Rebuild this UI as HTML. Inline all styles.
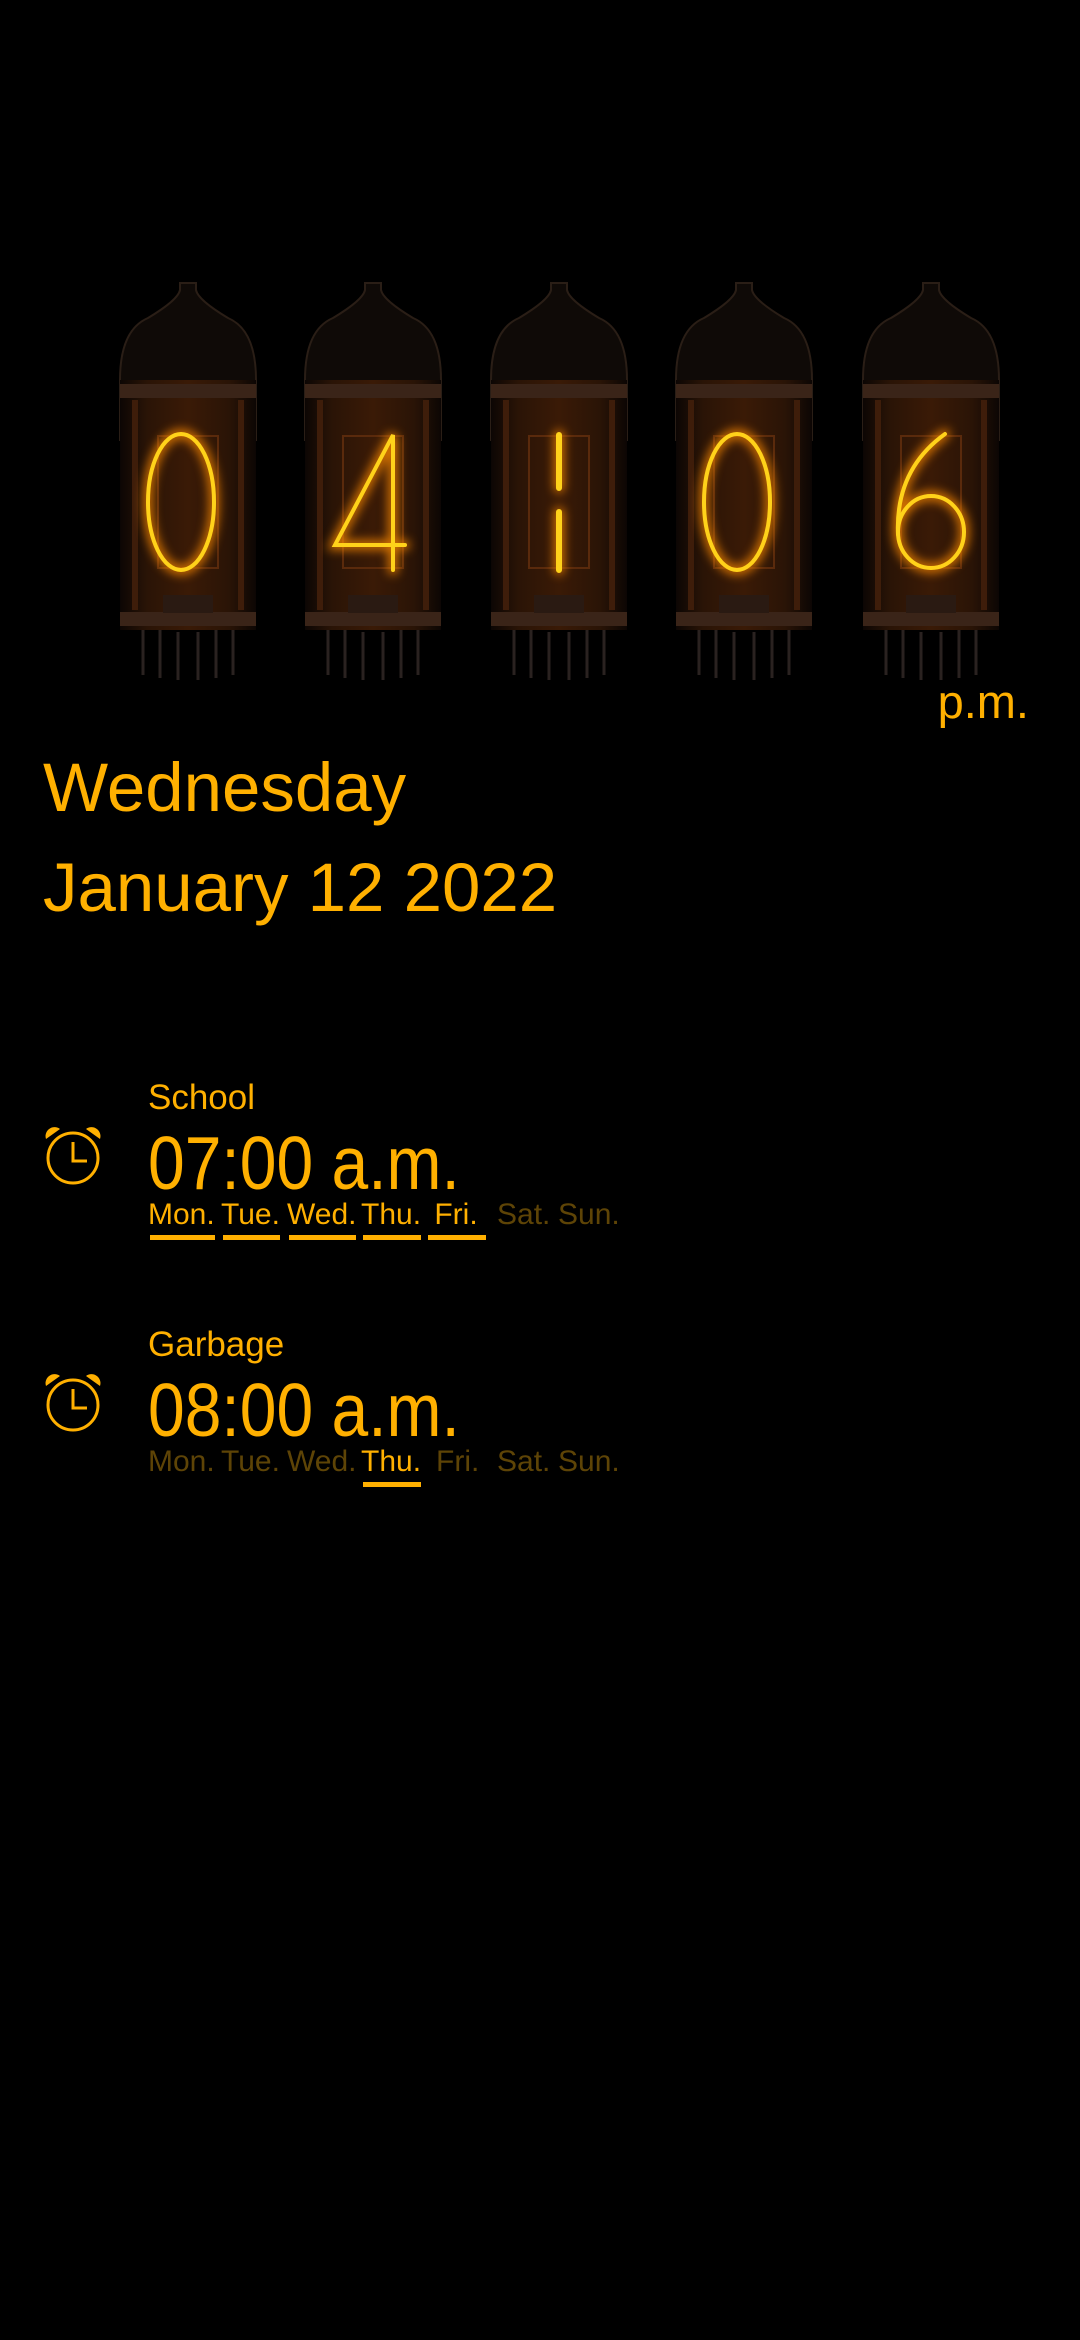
<!DOCTYPE html>
<html><head><meta charset="utf-8"><style>
html,body{margin:0;padding:0;background:#000;width:1080px;height:2340px;overflow:hidden}
body{position:relative;font-family:"Liberation Sans",sans-serif;color:#FFB000}
.t{position:absolute;white-space:nowrap;line-height:1}
.tm{transform:scaleX(0.88);transform-origin:0 0}
.d{position:absolute;font-size:30px;white-space:nowrap;line-height:1}
.on{color:#FFB000}
.on:after{content:"";position:absolute;left:2px;right:0;bottom:-10px;height:5px;background:#FFB000}
.off{color:#5e4406}
</style></head><body>
<svg width="1080" height="700" style="position:absolute;left:0;top:0">
<defs>
<linearGradient id="g" x1="0" x2="1">
<stop offset="0" stop-color="#0c0604"/><stop offset=".2" stop-color="#2a1406"/><stop offset=".5" stop-color="#3a1a06"/><stop offset=".8" stop-color="#2a1406"/><stop offset="1" stop-color="#0c0604"/></linearGradient>
<filter id="gl" x="-50%" y="-50%" width="200%" height="200%"><feGaussianBlur stdDeviation="5"/></filter>
<g id="tube">
<path d="M-68,440 V380 Q-68,330 -40,318 Q-10,300 -8,290 V283 H8 V290 Q10,300 40,318 Q68,330 68,380 V440 Z" fill="#0f0a07" stroke="#2a1e16" stroke-width="2"/>
<rect x="-68" y="380" width="136" height="250" fill="url(#g)"/>
<rect x="-68" y="384" width="136" height="14" fill="#3a2418"/>
<rect x="-68" y="612" width="136" height="14" fill="#3a2418"/>
<rect x="-56" y="400" width="6" height="210" fill="#3e1d0a"/>
<rect x="50" y="400" width="6" height="210" fill="#3e1d0a"/>
<rect x="-30" y="436" width="60" height="132" fill="none" stroke="#5a2a0c" stroke-width="2"/>
<rect x="-25" y="595" width="50" height="18" fill="#2a1a12"/>
<g stroke="#2a2220" stroke-width="3" fill="none">
<path d="M-45,630 V675 M-28,630 V678 M-10,632 V680 M10,632 V680 M28,630 V678 M45,630 V675"/>
</g>
</g>
</defs>
<g transform="translate(188,0)"><use href="#tube"/></g>
<g transform="translate(373,0)"><use href="#tube"/></g>
<g transform="translate(559,0)"><use href="#tube"/></g>
<g transform="translate(744,0)"><use href="#tube"/></g>
<g transform="translate(931,0)"><use href="#tube"/></g>
<g fill="none" stroke-linecap="round">
<g stroke="#ff8a00" stroke-width="10" filter="url(#gl)" opacity=".8">
<ellipse cx="181" cy="502" rx="33" ry="68"/>
<path d="M393,570 V435 L335,545 H405"/>
<path d="M559,435 V488 M559,512 V570"/>
<ellipse cx="737" cy="502" rx="33" ry="68"/>
<path d="M945,434 Q895,470 898,535 M931,496 m-33,36 a33,36 0 1,0 66,0 a33,36 0 1,0 -66,0"/>
</g>
<g stroke="#ffd21a" stroke-width="4">
<ellipse cx="181" cy="502" rx="33" ry="68"/>
<path d="M393,570 V435 L335,545 H405"/>
<path d="M559,435 V488 M559,512 V570" stroke-width="6"/>
<ellipse cx="737" cy="502" rx="33" ry="68"/>
<path d="M945,434 Q895,470 898,535 M931,496 m-33,36 a33,36 0 1,0 66,0 a33,36 0 1,0 -66,0"/>
</g>
</g>
</svg>
<div class="t" style="right:51px;top:678px;font-size:47px">p.m.</div>
<div class="t" style="left:43px;top:753px;font-size:69px">Wednesday</div>
<div class="t" style="left:43px;top:853px;font-size:69px">January 12 2022</div>

<svg width="60" height="60" viewBox="0 0 60 60" style="position:absolute;left:44px;top:1125px">
<circle cx="29" cy="33" r="25" fill="none" stroke="#FFB000" stroke-width="3"/>
<path d="M2,14 A9,9 0 0 1 16,4 Z M56,14 A9,9 0 0 0 42,4 Z" fill="#FFB000"/>
<path d="M29,17 V36 H43" fill="none" stroke="#FFB000" stroke-width="3"/>
</svg>
<div class="t" style="left:148px;top:1080px;font-size:35px">School</div>
<div class="t tm" style="left:148px;top:1126px;font-size:75px">07:00 a.m.</div>
<div class="d on" style="left:148px;top:1200px">Mon.</div>
<div class="d on" style="left:221px;top:1200px">Tue.</div>
<div class="d on" style="left:287px;top:1200px">Wed.</div>
<div class="d on" style="left:361px;top:1200px">Thu.</div>
<div class="d on" style="left:426px;top:1200px">&nbsp;Fri.&nbsp;</div>
<div class="d off" style="left:497px;top:1200px">Sat.</div>
<div class="d off" style="left:558px;top:1200px">Sun.</div>

<svg width="60" height="60" viewBox="0 0 60 60" style="position:absolute;left:44px;top:1372px">
<circle cx="29" cy="33" r="25" fill="none" stroke="#FFB000" stroke-width="3"/>
<path d="M2,14 A9,9 0 0 1 16,4 Z M56,14 A9,9 0 0 0 42,4 Z" fill="#FFB000"/>
<path d="M29,17 V36 H43" fill="none" stroke="#FFB000" stroke-width="3"/>
</svg>
<div class="t" style="left:148px;top:1327px;font-size:35px">Garbage</div>
<div class="t tm" style="left:148px;top:1373px;font-size:75px">08:00 a.m.</div>
<div class="d off" style="left:148px;top:1447px">Mon.</div>
<div class="d off" style="left:221px;top:1447px">Tue.</div>
<div class="d off" style="left:287px;top:1447px">Wed.</div>
<div class="d on" style="left:361px;top:1447px">Thu.</div>
<div class="d off" style="left:436px;top:1447px">Fri.</div>
<div class="d off" style="left:497px;top:1447px">Sat.</div>
<div class="d off" style="left:558px;top:1447px">Sun.</div>
</body></html>
